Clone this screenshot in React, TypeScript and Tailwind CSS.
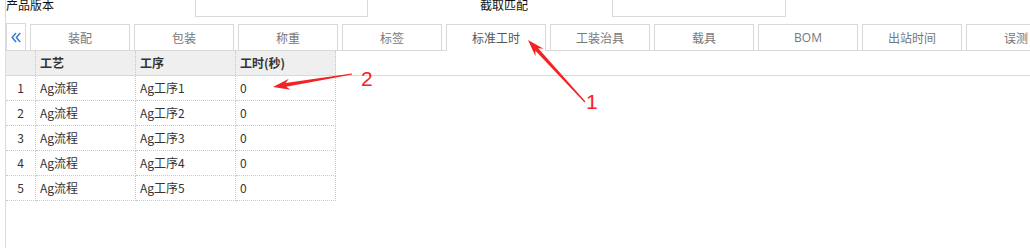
import React from "react";

const tabs = ["装配", "包装", "称重", "标签", "标准工时", "工装治具", "载具", "BOM", "出站时间", "误测"];
const activeTab = "标准工时";

const rows = [1, 2, 3, 4, 5].map((n) => ({ no: n, craft: "Ag流程", step: `Ag工序${n}`, time: "0" }));

// arrow polygon like a screenshot annotation tool draws: thin tail, notched head
function arrowPoints(tail: [number, number], tip: [number, number]) {
  const dx = tip[0] - tail[0];
  const dy = tip[1] - tail[1];
  const len = Math.hypot(dx, dy);
  const ux = dx / len;
  const uy = dy / len;
  const nx = -uy;
  const ny = ux;
  const headLen = 17;
  const headW = 5.5;
  const shaftW = 1.9;
  const tailW = 0.6;
  const bx = tip[0] - ux * headLen;
  const by = tip[1] - uy * headLen;
  const nbx = tip[0] - ux * (headLen - 4);
  const nby = tip[1] - uy * (headLen - 4);
  const pts: [number, number][] = [
    tip,
    [bx + nx * headW, by + ny * headW],
    [nbx + nx * shaftW, nby + ny * shaftW],
    [tail[0] + nx * tailW, tail[1] + ny * tailW],
    [tail[0] - nx * tailW, tail[1] - ny * tailW],
    [nbx - nx * shaftW, nby - ny * shaftW],
    [bx - nx * headW, by - ny * headW],
  ];
  return pts.map((p) => p.join(",")).join(" ");
}

export default function App() {
  return (
    <div
      className="relative w-[1030px] h-[248px] overflow-hidden bg-white text-[12px] text-[#333]"
      style={{ fontFamily: '"Noto Sans CJK SC", "Noto Sans", sans-serif' }}
    >
      <div className="ml-[5px] h-[248px] border-l border-[#dcdcdc]">
        {/* Filter fields */}
        <div className="flex items-start h-[24px]">
          <div className="w-[189px] -mt-[3px] leading-[16px] text-[#111]">产品版本</div>
          <div className="w-[173px] h-[27px] -mt-[10px] border border-[#d9d9d9]" />
          <div className="ml-[112px] w-[132px] -mt-[3px] leading-[16px] text-[#111]">截取匹配</div>
          <div className="w-[174px] h-[27px] -mt-[10px] border border-[#d9d9d9]" />
        </div>

        {/* Tabs */}
        <div className="flex items-end gap-[4px] h-[27px] border-b border-[#d9d9d9]">
          <div className="shrink-0 w-[20px] h-[27px] border border-b-0 border-[#d9d9d9] flex items-center justify-center">
            <svg width="10" height="11" viewBox="0 0 10 11">
              <polyline points="5,1 1.2,5.5 5,10" fill="none" stroke="#2b7fd6" strokeWidth="1.5" />
              <polyline points="9.2,1 5.4,5.5 9.2,10" fill="none" stroke="#2b7fd6" strokeWidth="1.5" />
            </svg>
          </div>
          {tabs.map((t) =>
            t === activeTab ? (
              <div
                key={t}
                className="relative z-10 shrink-0 w-[100px] h-[27px] -mb-[1px] bg-white border border-b-0 border-[#d9d9d9] flex items-center justify-center text-[#555] leading-none"
              >
                {t}
              </div>
            ) : (
              <div
                key={t}
                className="shrink-0 w-[100px] h-[26px] border border-b-0 border-[#d9d9d9] flex items-center justify-center text-[#777] leading-none"
                style={t === "BOM" ? { fontFamily: '"Open Sans", "Noto Sans", sans-serif' } : undefined}
              >
                {t}
              </div>
            )
          )}
        </div>

        {/* Grid header */}
        <div className="flex h-[25px] border-b border-[#d9d9d9]">
          <div className="w-[30px] bg-[#efefef] border-r border-dotted border-[#c8c8c8]" />
          {["工艺", "工序", "工时(秒)"].map((h) => (
            <div
              key={h}
              className="w-[100px] bg-[#efefef] border-r border-dotted border-[#c8c8c8] pl-[4px] flex items-center font-bold text-[#333]"
            >
              {h}
            </div>
          ))}
        </div>

        {/* Grid rows */}
        {rows.map((r) => (
          <div key={r.no} className="flex h-[25px]">
            <div className="w-[30px] border-r border-b border-dotted border-[#c8c8c8] flex items-center justify-center">
              {r.no}
            </div>
            <div className="w-[100px] border-r border-b border-dotted border-[#c8c8c8] pl-[4px] flex items-center">
              {r.craft}
            </div>
            <div className="w-[100px] border-r border-b border-dotted border-[#c8c8c8] pl-[4px] flex items-center">
              {r.step}
            </div>
            <div className="w-[100px] border-r border-b border-dotted border-[#c8c8c8] pl-[4px] flex items-center">
              {r.time}
            </div>
          </div>
        ))}
      </div>

      {/* Annotations */}
      <svg className="absolute left-0 top-0 z-20 pointer-events-none" width="1030" height="248">
        <polygon points={arrowPoints([585, 102], [528, 40])} fill="#f42222" />
        <polygon points={arrowPoints([352, 74], [273, 87])} fill="#f42222" />
      </svg>
      <span
        className="absolute z-20 left-[586px] top-[91px] text-[21px] leading-[21px] text-[#f42222]"
        style={{ fontFamily: '"Liberation Sans", sans-serif' }}
      >
        1
      </span>
      <span
        className="absolute z-20 left-[361px] top-[68px] text-[21px] leading-[21px] text-[#f42222]"
        style={{ fontFamily: '"Liberation Sans", sans-serif' }}
      >
        2
      </span>
    </div>
  );
}
